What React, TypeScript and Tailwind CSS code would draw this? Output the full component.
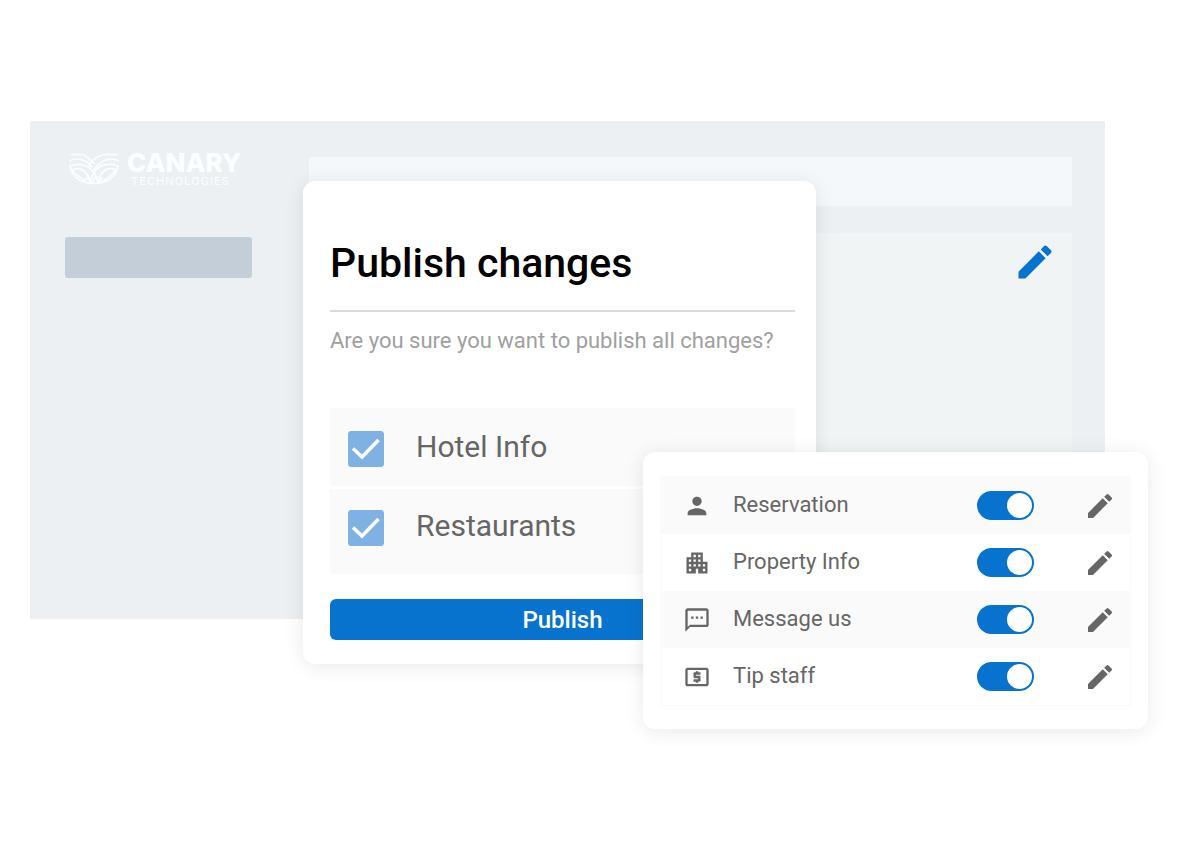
import type { IconType } from 'react-icons';
import { MdApartment, MdEdit, MdLocalAtm, MdOutlineTextsms, MdPerson } from 'react-icons/md';

interface ServiceItem {
  id: string;
  label: string;
  icon: IconType;
}

const services: ServiceItem[] = [
  { id: 'reservation', label: 'Reservation', icon: MdPerson },
  { id: 'property-info', label: 'Property Info', icon: MdApartment },
  { id: 'message-us', label: 'Message us', icon: MdOutlineTextsms },
  { id: 'tip-staff', label: 'Tip staff', icon: MdLocalAtm },
];

const changes = [
  { id: 'hotel-info', label: 'Hotel Info' },
  { id: 'restaurants', label: 'Restaurants' },
];

const Logo = () => (
  <div className="flex items-center gap-2 text-[#fbfeff]">
    <svg viewBox="0 0 50 32" className="h-8 w-[50px]" fill="none" stroke="currentColor" strokeWidth="1.7" strokeLinecap="round">
      {/* left wing */}
      <path d="M3 1.5H13C18 2 20 7 25 10" />
      <path d="M1 7.5C9 4 18 7 23 14" />
      <path d="M1 13C14 8 26 15 29 29" />
      <path d="M3 17C12 13 19 19 21 29" />
      {/* right wing */}
      <path d="M48 1.5H38C29 2 22 7 20 14" />
      <path d="M49 7.5C40 4 31 8 25 17" />
      <path d="M49 13C38 8 25 13 22 27" />
      <path d="M47 17C38 13 31 19 29 29" />
      {/* bowl */}
      <path d="M1 13C3 25 13 30.5 25 30.5S47 25 49 13" />
      <path d="M3 17C7 22 12 25 16 28L19 24L23 30L26 24L30 29L33 25" />
      <path d="M47 17C43 22 38 25 34 28" />
    </svg>
    <div className="font-['Inter']">
      <div className="text-[26px] leading-6 font-extrabold">CANARY</div>
      <div className="pl-1 text-[11px] leading-3 tracking-widest">TECHNOLOGIES</div>
    </div>
  </div>
);

const PublishDialog = () => (
  <section className="absolute top-[60px] left-[273px] w-[513px] rounded-xl bg-white pt-[57px] pr-[21px] pb-6 pl-[27px] shadow-[0_2px_20px_rgba(0,0,0,0.09)]">
    <h1 className="border-b-2 border-[#d8dce2] pb-[22px] text-[41px] leading-[50px] font-medium text-black">Publish changes</h1>
    <p className="pt-[15px] text-[22px] leading-[28px] text-[#a0a0a0]">Are you sure you want to publish all changes?</p>

    <div className="mt-[53px] divide-y-3 divide-white bg-[#fafafa] pt-[3px] pb-[7px]">
      {changes.map((change) => (
        <div key={change.id} className="flex h-[78px] items-center pl-[18px]">
          <div className="grid size-9">
            <input
              id={change.id}
              type="checkbox"
              defaultChecked
              className="peer col-start-1 row-start-1 size-9 appearance-none rounded-[3px] border border-[#7fb2e2] checked:bg-[#7fb2e2]"
            />
            <svg
              viewBox="0 0 36 36"
              className="pointer-events-none col-start-1 row-start-1 size-9 opacity-0 peer-checked:opacity-100"
              fill="none"
              stroke="white"
              strokeWidth="3.5"
            >
              <path d="M5 17.5L14 26L30.5 9" />
            </svg>
          </div>
          <label htmlFor={change.id} className="pb-1 pl-8 text-[30px] leading-9 text-[#666]">
            {change.label}
          </label>
        </div>
      ))}
    </div>

    <button type="button" className="mt-[25px] h-[41px] w-full rounded-md bg-[#0873ce] text-2xl font-medium text-white">
      Publish
    </button>
  </section>
);

const ServicesCard = () => (
  <section className="absolute top-[331px] -right-[43px] w-[505px] rounded-xl bg-white px-[17px] pt-6 pb-[23px] shadow-[0_2px_20px_rgba(0,0,0,0.09)]">
    <ul className="border border-[#fafafa]">
      {services.map(({ id, label, icon: Icon }) => (
        <li key={id} className="flex h-[57px] items-center pr-[14px] pl-[22px] text-[#666] odd:bg-[#fafafa]">
          <Icon className="size-7" />
          <label htmlFor={id} className="flex-1 pb-0.5 pl-[22px] text-[22px] leading-7">
            {label}
          </label>
          <input
            id={id}
            type="checkbox"
            role="switch"
            defaultChecked
            className="flex h-[29px] w-[57px] appearance-none items-center rounded-full bg-gray-300 px-[2px] before:size-[25px] before:rounded-full before:bg-white checked:justify-end checked:bg-[#0873ce]"
          />
          <button type="button" aria-label={`Edit ${label}`} className="ml-[50px]">
            <MdEdit className="size-8" />
          </button>
        </li>
      ))}
    </ul>
  </section>
);

export default function App() {
  return (
    <main className="min-h-screen bg-white pt-[121px] pr-[75px] pl-[30px] font-['Roboto',sans-serif]">
      <div className="relative flex h-[498px] rounded-xs bg-[#ecf0f3]">
        <aside className="w-[279px] shrink-0 pt-[30px] pl-[35px]">
          <div className="pl-1">
            <Logo />
          </div>
          <div className="mt-[50px] h-[41px] w-[187px] rounded-[3px] bg-[#c4ced9]" />
        </aside>
        <div className="mr-[33px] flex flex-1 flex-col gap-[27px] pt-9">
          <div className="h-[49px] bg-[#f4f8fb]" />
          <div className="flex flex-1 items-start justify-end bg-[#f0f4f5] pt-[7px] pr-[15px]">
            <button type="button" aria-label="Edit page" className="text-[#0873ce]">
              <MdEdit className="size-11" />
            </button>
          </div>
        </div>

        <PublishDialog />
        <ServicesCard />
      </div>
    </main>
  );
}
